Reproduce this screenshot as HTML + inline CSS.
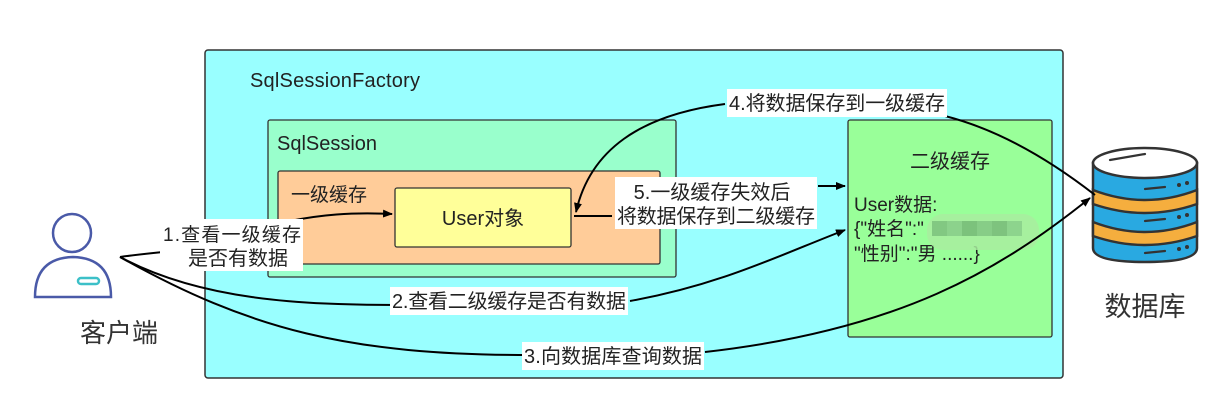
<!DOCTYPE html>
<html><head><meta charset="utf-8"><style>
html,body{margin:0;padding:0;background:#fff;width:1205px;height:404px;overflow:hidden}
text{font-family:"Liberation Sans","Noto Sans CJK SC",sans-serif;fill:#222}
</style></head><body>
<svg width="1205" height="404" viewBox="0 0 1205 404" xmlns="http://www.w3.org/2000/svg">
<defs><marker id="a" markerWidth="10" markerHeight="8" refX="9" refY="4" orient="auto" markerUnits="userSpaceOnUse"><path d="M0,0 L10,4 L0,8 Z" fill="#000"/></marker></defs>
<rect x="205" y="50" width="858" height="328" rx="3" fill="#99ffff" stroke="#333" stroke-width="1.5"/>
<text x="250" y="87" font-size="20" textLength="170">SqlSessionFactory</text>
<rect x="268" y="120" width="408" height="157" rx="2" fill="#99ffcc" stroke="#333" stroke-width="1.3"/>
<text x="277" y="150" font-size="20" textLength="100">SqlSession</text>
<rect x="278" y="171" width="382" height="93" rx="2" fill="#ffcc99" stroke="#333" stroke-width="1.3"/>
<text x="291" y="201" font-size="19">一级缓存</text>
<rect x="395" y="188" width="176" height="59" rx="2" fill="#ffff99" stroke="#333" stroke-width="1.3"/>
<text x="483" y="225" font-size="20" text-anchor="middle">User对象</text>
<rect x="848" y="120" width="204" height="217" rx="2" fill="#99ff99" stroke="#333" stroke-width="1.3"/>
<text x="950" y="168" font-size="20" text-anchor="middle">二级缓存</text>
<text x="854" y="211" font-size="19">User数据:</text>
<text x="854" y="235" font-size="19">{"姓名":"</text>
<text x="854" y="260" font-size="19">"性别":"男  ......}</text>
<g opacity="0.85">
<rect x="927" y="214" width="112" height="36" rx="16" fill="#a9ee9f"/>
<rect x="932" y="221" width="15" height="15" fill="#7fbf7f"/><rect x="947" y="221" width="15" height="15" fill="#8acb8a"/><rect x="962" y="221" width="15" height="15" fill="#77b877"/><rect x="977" y="221" width="15" height="15" fill="#85c585"/><rect x="992" y="221" width="15" height="15" fill="#7ab97a"/><rect x="1007" y="221" width="15" height="15" fill="#8ccd8c"/>
</g>
<g fill="none" stroke="#4a5aa8" stroke-width="2.5">
<circle cx="72" cy="233" r="19"/>
<path d="M35,297 Q35,258 73,257 Q111,258 111,297 Z"/>
</g>
<rect x="78" y="278" width="21" height="6" rx="3" fill="none" stroke="#3cc0c8" stroke-width="2.5"/>
<text x="119" y="342" font-size="26" text-anchor="middle" style="fill:#333">客户端</text>
<g stroke="#333" stroke-width="2.5">
<path d="M1093,163 V248 Q1093,262 1145,262 Q1197,262 1197,248 V163 Z" fill="#29a9e1"/>
<path d="M1093,190 Q1145,210 1197,190 V204 Q1145,222 1093,204 Z" fill="#f5ae3e"/>
<path d="M1093,222 Q1145,242 1197,222 V236 Q1145,254 1093,236 Z" fill="#f5ae3e"/>
<ellipse cx="1145" cy="163" rx="52" ry="15" fill="#fff"/>
</g>
<g stroke="#333" stroke-width="2.2" stroke-linecap="round"><path d="M1110,160 L1145,154"/><path d="M1145,189 L1165,187"/><path d="M1145,221 L1165,219"/><path d="M1145,253 L1165,251"/></g>
<g fill="#333"><circle cx="1179" cy="185" r="2"/><circle cx="1187" cy="183" r="2"/><circle cx="1179" cy="217" r="2"/><circle cx="1187" cy="215" r="2"/><circle cx="1179" cy="249" r="2"/><circle cx="1187" cy="247" r="2"/></g>
<text x="1145" y="316" font-size="27" text-anchor="middle" style="fill:#333">数据库</text>
<g fill="none" stroke="#000" stroke-width="2">
<path d="M120,257 C170,250 200,250 230,245" />
<path d="M290,221 C320,215 350,212 392,214" marker-end="url(#a)"/>
<path d="M120,257 C200,300 300,305 400,305"/>
<path d="M630,301 C720,285 780,255 845,230" marker-end="url(#a)"/>
<path d="M120,257 C250,330 350,355 530,355"/>
<path d="M705,352 C900,330 1000,270 1090,198" marker-end="url(#a)"/>
<path d="M945,116 C1000,130 1050,160 1095,195"/>
<path d="M725,104 C640,115 590,150 576,212" marker-end="url(#a)"/>
<path d="M574,216 L612,216"/>
<path d="M818,186 L845,186" marker-end="url(#a)"/>
</g>
<rect x="160" y="219" width="143" height="52" fill="#fff"/>
<text x="232" y="241" font-size="19" text-anchor="middle" textLength="138">1.查看一级缓存</text>
<text x="238" y="265" font-size="20" text-anchor="middle">是否有数据</text>
<rect x="390" y="287" width="238" height="28" fill="#fff"/>
<text x="392" y="308" font-size="20" textLength="234">2.查看二级缓存是否有数据</text>
<rect x="522" y="342" width="182" height="28" fill="#fff"/>
<text x="524" y="363" font-size="20" textLength="178">3.向数据库查询数据</text>
<rect x="727" y="89" width="220" height="28" fill="#fff"/>
<text x="729" y="110" font-size="20" textLength="216">4.将数据保存到一级缓存</text>
<rect x="615" y="177" width="202" height="52" fill="#fff"/>
<text x="712" y="199" font-size="20" text-anchor="middle">5.一级缓存失效后</text>
<text x="716" y="223" font-size="20" text-anchor="middle" textLength="198">将数据保存到二级缓存</text>
</svg>
</body></html>
